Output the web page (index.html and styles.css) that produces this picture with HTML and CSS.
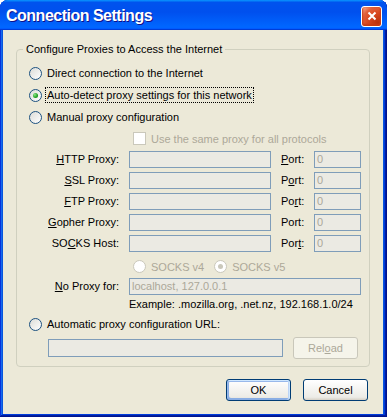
FILE: index.html
```html
<!DOCTYPE html>
<html lang="en">
<head>
    <meta charset="UTF-8">
    <meta name="viewport" content="width=device-width, initial-scale=1.0">
    <title>Connection Settings</title>
    <link rel="stylesheet" href="styles.css">
</head>
<body>
    <div class="window">
        <div class="title-bar">
            <span class="title">Connection Settings</span>
            <button class="close-btn" aria-label="Close">
                <svg width="10" height="10" viewBox="0 0 10 10">
                    <path d="M1.5 1.5 L8.5 8.5 M8.5 1.5 L1.5 8.5" stroke="#fff" stroke-width="2" fill="none"/>
                </svg>
            </button>
        </div>

        <div class="client">
            <fieldset class="group">
                <legend>Configure Proxies to Access the Internet</legend>

                <div class="option first">
                    <span class="radio"></span>
                    <span class="option-label">Direct connection to the Internet</span>
                </div>
                <div class="option">
                    <span class="radio checked"></span>
                    <span class="option-label focused">Auto-detect proxy settings for this network</span>
                </div>
                <div class="option">
                    <span class="radio"></span>
                    <span class="option-label">Manual proxy configuration</span>
                </div>

                <div class="same-proxy">
                    <span class="checkbox"></span>
                    <span class="same-proxy-text">Use the same proxy for all protocols</span>
                </div>

                <div class="proxy-grid">
                    <label><u>H</u>TTP Proxy:</label>
                    <div class="field"></div>
                    <label class="port-label"><u>P</u>ort:</label>
                    <div class="field">0</div>

                    <label><u>S</u>SL Proxy:</label>
                    <div class="field"></div>
                    <label class="port-label">P<u>o</u>rt:</label>
                    <div class="field">0</div>

                    <label><u>F</u>TP Proxy:</label>
                    <div class="field"></div>
                    <label class="port-label">Po<u>r</u>t:</label>
                    <div class="field">0</div>

                    <label><u>G</u>opher Proxy:</label>
                    <div class="field"></div>
                    <label class="port-label">Port:</label>
                    <div class="field">0</div>

                    <label>SO<u>C</u>KS Host:</label>
                    <div class="field"></div>
                    <label class="port-label">Por<u>t</u>:</label>
                    <div class="field">0</div>
                </div>

                <div class="socks">
                    <span class="radio disabled"></span>
                    <span class="socks-text">SOCKS v4</span>
                    <span class="radio disabled checked v5"></span>
                    <span class="socks-text">SOCKS v5</span>
                </div>

                <div class="no-proxy">
                    <label><u>N</u>o Proxy for:</label>
                    <div class="field">localhost, 127.0.0.1</div>
                </div>

                <div class="example">Example: .mozilla.org, .net.nz, 192.168.1.0/24</div>

                <div class="option auto">
                    <span class="radio"></span>
                    <span class="option-label">Automatic proxy configuration URL:</span>
                </div>

                <div class="url-row">
                    <div class="field url-field"></div>
                    <button class="btn" disabled>Rel<u>o</u>ad</button>
                </div>
            </fieldset>

            <div class="dialog-buttons">
                <button class="btn default">OK</button>
                <button class="btn">Cancel</button>
            </div>
        </div>
    </div>
</body>
</html>
```

FILE: styles.css
```css
* {
    margin: 0;
    padding: 0;
    box-sizing: border-box;
}

body {
    background-color: #ffffff;
    font-family: "Liberation Sans", Arial, sans-serif;
    font-size: 11px;
    color: #000;
}

.window {
    width: 387px;
    height: 417px;
    display: flex;
    flex-direction: column;
    background-color: #0855dd;
    border-radius: 8px 8px 0 0;
    overflow: hidden;
    box-shadow: inset -1px -1px #00138c, inset 1px 1px #0831d9,
                inset -2px -2px #001ea0, inset 2px 2px #166aee,
                inset -3px -3px #003bda, inset 3px 3px #0855dd;
}

/* Title bar */
.title-bar {
    height: 30px;
    flex: none;
    display: flex;
    align-items: center;
    justify-content: space-between;
    padding: 2px 5px 0 6px;
    background: linear-gradient(180deg, #0997ff, #0053ee 8%, #0050ee 40%, #06f 88%, #06f 93%, #005bff 95%, #003dd7 96%, #003dd7);
}

.title {
    color: #fff;
    font-weight: bold;
    font-size: 16px;
    letter-spacing: -0.5px;
    text-shadow: 1px 1px #0f1089;
}

.close-btn {
    width: 21px;
    height: 21px;
    border: 1px solid #fff;
    border-radius: 3px;
    display: flex;
    align-items: center;
    justify-content: center;
    background: radial-gradient(circle at 85% 85%, #b8300c 0%, #d9481f 45%, #e2603a 70%, #f3a58c 92%, #fff 100%);
    box-shadow: inset 0 -1px 2px 1px #c83c14;
}

/* Client area */
.client {
    flex: 1;
    margin: 0 4px 3px 3px;
    padding-top: 13px;
    background-color: #ece9d8;
}

.group {
    margin-left: 13px;
    width: 354px;
    min-width: 0;
    border: 1px solid #d0d0bf;
    border-radius: 4px;
    padding: 9px 0 7px 12px;
}

.group legend {
    padding: 0 3px;
    margin-left: -6px;
    line-height: 13px;
}

.option {
    display: flex;
    align-items: center;
    gap: 3px;
    height: 16px;
    margin-top: 6px;
}

.option.first {
    margin-top: 0;
}

.option.auto {
    margin-top: 5px;
}

.option-label {
    border: 1px dotted transparent;
    padding: 0 1px;
    line-height: 14px;
    white-space: nowrap;
}

.option-label.focused {
    border-color: #000;
}

.radio {
    flex: none;
    width: 13px;
    height: 13px;
    border: 1px solid #1c5180;
    border-radius: 50%;
    background: linear-gradient(135deg, #dcdcd7, #fff);
}

.radio.checked::after {
    content: "";
    display: block;
    width: 5px;
    height: 5px;
    margin: 3px;
    border-radius: 50%;
    background: radial-gradient(circle at 35% 35%, #8ce68a, #21a121 60%, #108010);
}

.radio.disabled {
    border-color: #cac8bb;
    background: #fff;
}

.radio.disabled.checked::after {
    background: #cac8bb;
}

.checkbox {
    flex: none;
    width: 13px;
    height: 13px;
    border: 1px solid #cac8bb;
    background: #fff;
}

.same-proxy {
    display: flex;
    align-items: center;
    height: 13px;
    margin-top: 7px;
    padding-left: 104px;
    color: #aca899;
}

.same-proxy-text {
    margin-left: 5px;
    white-space: nowrap;
}

/* Proxy fields */
.proxy-grid {
    display: grid;
    grid-template-columns: 100px 142px 43px 47px;
    grid-auto-rows: 17px;
    row-gap: 4px;
    margin-top: 6px;
}

.proxy-grid label,
.no-proxy label {
    text-align: right;
    padding-right: 10px;
    line-height: 17px;
    white-space: nowrap;
}

.proxy-grid .port-label {
    text-align: left;
    padding: 0 0 0 10px;
}

.field {
    height: 17px;
    border: 1px solid #7f9db9;
    background-color: #ebeae3;
    color: #aca899;
    padding-left: 2px;
    line-height: 15px;
    white-space: nowrap;
    overflow: hidden;
}

.socks {
    display: flex;
    align-items: center;
    height: 13px;
    margin-top: 8px;
    padding-left: 104px;
    color: #aca899;
}

.socks-text {
    margin-left: 5px;
    white-space: nowrap;
}

.radio.v5 {
    margin-left: 10px;
}

.no-proxy {
    display: grid;
    grid-template-columns: 100px 232px;
    height: 17px;
    margin-top: 5px;
}

.example {
    margin-top: 3px;
    padding-left: 100px;
    line-height: 13px;
    white-space: nowrap;
}

.url-row {
    display: flex;
    align-items: center;
    gap: 10px;
    height: 22px;
    margin-top: 5px;
    padding-left: 19px;
}

.url-field {
    width: 235px;
    height: 18px;
}

/* Buttons */
.btn {
    width: 65px;
    height: 22px;
    border: 1px solid #003c74;
    border-radius: 3px;
    background: linear-gradient(180deg, #fff, #ecebe6 86%, #d6d0c5);
    font-family: inherit;
    font-size: 11px;
    color: #000;
}

.btn:disabled {
    border-color: #c9c7ba;
    background: #f5f4ea;
    color: #aca899;
}

.btn.default {
    box-shadow: inset -1px 1px #cee7ff, inset 1px 2px #98b8ea, inset -2px 0 #bcd4f6,
                inset 1px -1px #89ade4, inset 2px -2px #89ade4;
}

.dialog-buttons {
    display: flex;
    justify-content: flex-end;
    gap: 12px;
    margin-top: 12px;
    padding-right: 15px;
}
```
